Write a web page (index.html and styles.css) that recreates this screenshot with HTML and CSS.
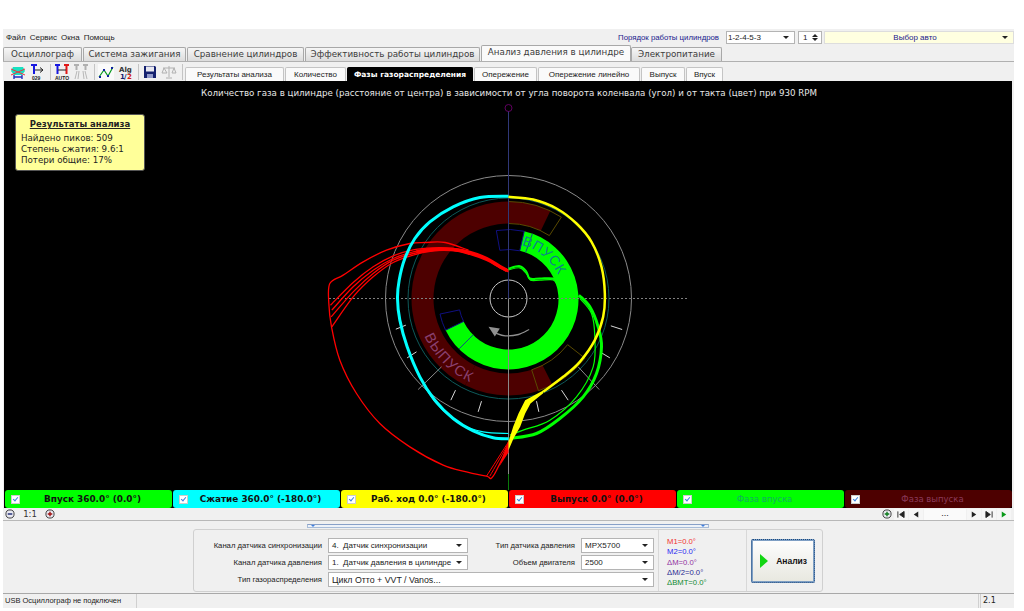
FILE: index.html
```html
<!DOCTYPE html>
<html lang="ru">
<head>
    <meta charset="UTF-8">
    <title>Анализ давления в цилиндре</title>
    <link rel="stylesheet" href="styles.css">
</head>
<body>
    <div class="app">
        <div class="top-row">
            <div class="menu">
                <span>Файл</span><span>Сервис</span><span>Окна</span><span>Помощь</span>
            </div>
            <div class="top-controls">
                <span class="order-label">Порядок работы цилиндров</span>
                <div class="combo combo-order"><span>1-2-4-5-3</span><i class="arrow"></i></div>
                <div class="spin"><span>1</span><i class="spin-arrows"></i></div>
                <div class="combo combo-car"><span>Выбор авто</span><i class="arrow"></i></div>
            </div>
        </div>

        <div class="main-tabs">
            <div class="main-tab tab-1">Осциллограф</div>
            <div class="main-tab tab-2">Система зажигания</div>
            <div class="main-tab tab-3">Сравнение цилиндров</div>
            <div class="main-tab tab-4">Эффективность работы цилиндров</div>
            <div class="main-tab tab-5 active">Анализ давления в цилиндре</div>
            <div class="main-tab tab-6">Электропитание</div>
        </div>

        <div class="toolbar-row">
            <div class="toolbar">
                <svg class="tool" viewBox="0 0 16 16">
                    <path d="M3 3h10l2 4-3 4H4L1 7z" fill="#19e0c0"/>
                    <path d="M1 5l14 6M15 5L1 11" stroke="#f03040" stroke-width="1"/>
                    <path d="M4 13h8M4 11v4M12 11v4" stroke="#2030c0" stroke-width="1.4" fill="none"/>
                </svg>
                <svg class="tool" viewBox="0 0 16 16">
                    <path d="M2 1h6M5 1v9" stroke="#1818e0" stroke-width="2" fill="none"/>
                    <path d="M6 6h8M11 3.500l3 2.500-3 2.500" stroke="#222" stroke-width="1" fill="none"/>
                    <text x="3" y="15.500" class="tool-text">029</text>
                </svg>
                <i class="tool-sep"></i>
                <svg class="tool" viewBox="0 0 16 16">
                    <path d="M1 1h5M3.500 1v9" stroke="#1818e0" stroke-width="2" fill="none"/>
                    <path d="M10 1h5M12.500 1v9" stroke="#e01818" stroke-width="2" fill="none"/>
                    <path d="M4 6h8" stroke="#222" stroke-width="1"/>
                    <text x="1" y="15.500" class="tool-text">AUTO</text>
                </svg>
                <svg class="tool" viewBox="0 0 16 16">
                    <path d="M1 1h5M3.500 1v5M10 1h5M12.500 1v5" stroke="#b0b0b0" stroke-width="2" fill="none"/>
                    <path d="M4 7L2 15M6 7l-1 8M10 7l1 8M12 7l2 8" stroke="#b8b8b8" stroke-width="1" fill="none"/>
                </svg>
                <i class="tool-sep"></i>
                <svg class="tool tool-on" viewBox="0 0 16 16">
                    <path d="M1 13L6 6l4 6 5-9" stroke="#0a9a20" stroke-width="1.200" fill="none"/>
                    <path d="M1 12h2v2H1zM5 5h2v2H5zM9 11h2v2H9zM13 3h2v2h-2z" fill="#1020a0"/>
                </svg>
                <svg class="tool" viewBox="0 0 16 16">
                    <text x="2" y="7.500" class="tool-alg">Alg</text>
                    <text x="3" y="15" class="tool-num">1</text>
                    <text x="7" y="15" class="tool-num">/</text>
                    <text x="10" y="15" class="tool-num-red">2</text>
                </svg>
                <i class="tool-sep"></i>
                <svg class="tool" viewBox="0 0 16 16">
                    <path d="M2 2h11l1 1v11H2z" fill="#14206e"/>
                    <path d="M4 2.500h8v5H4z" fill="#e8e8f0"/>
                    <path d="M5 10h6v4H5z" fill="#9098c8"/>
                </svg>
                <svg class="tool" viewBox="0 0 16 16">
                    <path d="M8 2v11M5 14h6M2 4h12M3 4L1 9h5zM13 4l-2 5h4z" stroke="#b0b0b0" fill="none"/>
                </svg>
                <i class="tool-sep"></i>
            </div>
            <div class="sub-tabs">
                <div class="sub-tab sub-1">Результаты анализа</div>
                <div class="sub-tab sub-2">Количество</div>
                <div class="sub-tab sub-3 active">Фазы газораспределения</div>
                <div class="sub-tab sub-4">Опережение</div>
                <div class="sub-tab sub-5">Опережение линейно</div>
                <div class="sub-tab sub-6">Выпуск</div>
                <div class="sub-tab sub-7">Впуск</div>
            </div>
        </div>

        <div class="chart">
            <div class="chart-title">Количество газа в цилиндре (расстояние от центра) в зависимости от угла поворота коленвала (угол) и от такта (цвет) при 930 RPM</div>
            <div class="info-box">
                <div class="info-title">Результаты анализа</div>
                <div>Найдено пиков: 509</div>
                <div>Степень сжатия: 9.6:1</div>
                <div>Потери общие: 17%</div>
            </div>
            <svg class="polar" width="1008" height="409" viewBox="0 0 1008 409" id="polar"></svg>
        </div>

        <div class="legend">
            <div class="legend-item c-green"><i class="check"></i><span>Впуск 360.0° (0.0°)</span></div>
            <div class="legend-item c-cyan"><i class="check"></i><span>Сжатие 360.0° (-180.0°)</span></div>
            <div class="legend-item c-yellow"><i class="check"></i><span>Раб. ход 0.0° (-180.0°)</span></div>
            <div class="legend-item c-red"><i class="check"></i><span>Выпуск 0.0° (0.0°)</span></div>
            <div class="legend-item c-phase-in"><i class="check"></i><span>Фаза впуска</span></div>
            <div class="legend-item c-phase-out"><i class="check"></i><span>Фаза выпуска</span></div>
        </div>

        <div class="nav-row">
            <div class="zoom-ctrl">
                <svg class="zoom-btn" viewBox="0 0 11 11"><circle cx="5.500" cy="5.500" r="4.500" fill="#e8e8f0" stroke="#333"/><path d="M3 5.500h5" stroke="#14206e" stroke-width="1.500"/></svg>
                <span class="zoom-value">1:1</span>
                <svg class="zoom-btn" viewBox="0 0 11 11"><circle cx="5.500" cy="5.500" r="4.500" fill="#e8e8f0" stroke="#333"/><path d="M3 5.500h5M5.500 3v5" stroke="#a01010" stroke-width="1.500"/></svg>
            </div>
            <div class="playback">
                <svg class="zoom-btn zoom-plus" viewBox="0 0 11 11"><circle cx="5.500" cy="5.500" r="4.500" fill="#e8e8f0" stroke="#333"/><path d="M3 5.500h5M5.500 3v5" stroke="#0a7a1a" stroke-width="1.500"/></svg>
                <div class="play-btn"><svg viewBox="0 0 9 7"><path d="M1 0v7M8 0v7L3 3.500z" stroke="#222" fill="#222" stroke-width="1"/></svg></div>
                <div class="play-btn"><svg viewBox="0 0 9 7"><path d="M7 0v7L2 3.500z" fill="#222"/></svg></div>
                <div class="play-value">...</div>
                <div class="play-btn"><svg viewBox="0 0 9 7"><path d="M2 0v7l5-3.500z" fill="#222"/></svg></div>
                <div class="play-btn"><svg viewBox="0 0 9 7"><path d="M8 0v7M1 0v7l5-3.500z" stroke="#222" fill="#222" stroke-width="1"/></svg></div>
                <div class="play-btn"><svg viewBox="0 0 9 7"><path d="M2 0v7l5-3.500z" fill="#0a9a1a"/></svg></div>
            </div>
        </div>

        <div class="bottom">
            <div class="splitter"><i></i><i></i></div>
            <div class="panel">
                <div class="panel-col col-left">
                    <div class="field"><label>Канал датчика синхронизации</label><div class="combo combo-wide"><span>4.&nbsp; Датчик синхронизации</span><i class="arrow"></i></div></div>
                    <div class="field"><label>Канал датчика давления</label><div class="combo combo-wide"><span>1.&nbsp; Датчик давления в цилиндре</span><i class="arrow"></i></div></div>
                    <div class="field"><label>Тип газораспределения</label><div class="combo combo-full"><span>Цикл Отто + VVT / Vanos...</span><i class="arrow"></i></div></div>
                    <div class="col-right">
                        <div class="field"><label>Тип датчика давления</label><div class="combo combo-short"><span>MPX5700</span><i class="arrow"></i></div></div>
                        <div class="field"><label>Объем двигателя</label><div class="combo combo-short"><span>2500</span><i class="arrow"></i></div></div>
                    </div>
                </div>
                <div class="markers">
                    <div class="m-red">M1=0.0°</div>
                    <div class="m-blue">M2=0.0°</div>
                    <div class="m-purple">ΔM=0.0°</div>
                    <div class="m-navy">ΔM/2=0.0°</div>
                    <div class="m-green">ΔBMT=0.0°</div>
                </div>
                <div class="run-cell">
                    <button class="run-btn"><svg width="9" height="14" viewBox="0 0 9 14"><path d="M0 0l8 7-8 7z" fill="#12d612"/></svg><span>Анализ</span></button>
                </div>
            </div>
        </div>

        <div class="status">
            <div class="status-pane pane-1">USB Осциллограф не подключен</div>
            <div class="status-pane pane-2"></div>
            <div class="status-pane pane-3">2.1</div>
        </div>
    </div>
    <script src="chart.js"></script>
</body>
</html>
```
FILE: styles.css
```css
html, body {
    margin: 0;
    height: 100%;
    background: #fff;
    overflow: hidden;
}

.app {
    box-sizing: border-box;
    width: 1011px;
    height: 579px;
    margin: 29px 0 0 3px;
    background: #f0f0f0;
    font-family: "Liberation Sans", Arial, sans-serif;
    font-size: 8px;
    color: #222;
    display: flex;
    flex-direction: column;
}

/* top row */
.top-row {
    height: 17px;
    display: flex;
    justify-content: space-between;
    align-items: center;
}

.menu {
    display: flex;
    gap: 4px;
    padding-left: 3px;
}

.top-controls {
    display: flex;
    align-items: center;
}

.order-label {
    color: #1a1a8c;
    margin-right: 7px;
    font-size: 7.800px;
}

.combo {
    box-sizing: border-box;
    display: flex;
    align-items: center;
    justify-content: space-between;
    height: 15px;
    padding: 0 3px;
    background: #fff;
    border: 1px solid #b4b4b4;
    white-space: nowrap;
}

.arrow {
    width: 0;
    height: 0;
    border: 3px solid transparent;
    border-top: 3px solid #222;
    border-bottom: 0;
    margin-right: 2px;
}

.combo-order {
    width: 69px;
    height: 13px;
    margin-right: 3px;
    padding-left: 1px;
}

.spin {
    box-sizing: border-box;
    width: 24px;
    height: 13px;
    padding: 0 3px 0 4px;
    background: #fff;
    border: 1px solid #b4b4b4;
    display: flex;
    align-items: center;
    justify-content: space-between;
    margin-right: 2px;
}

.spin-arrows {
    width: 0;
    height: 1px;
    border: 3px solid transparent;
    border-top: 0;
    position: relative;
    border-bottom: 3px solid #222;
    margin-bottom: 5px;
}

.spin-arrows::after {
    content: "";
    position: absolute;
    top: 5px;
    left: -3px;
    border: 3px solid transparent;
    border-bottom: 0;
    border-top: 3px solid #222;
}

.combo-car {
    width: 190px;
    height: 13px;
    background: #ffffe0;
    border-color: #ddd;
}

.combo-car span {
    flex: 1;
    text-align: center;
    color: #1a1a8c;
}

/* main tabs */
.main-tabs {
    display: flex;
    align-items: flex-end;
    height: 15px;
    font-family: "DejaVu Sans", Verdana, sans-serif;
    font-size: 8.750px;
    color: #3c3c3c;
}

.main-tab {
    box-sizing: border-box;
    height: 14px;
    text-align: center;
    line-height: 13px;
    white-space: nowrap;
    background: linear-gradient(#f6f6f6, #dcdcdc);
    border: 1px solid #a8a8a8;
    border-bottom: 0;
    border-radius: 2px 2px 0 0;
    margin-right: 1px;
}

.main-tab.active {
    height: 16px;
    background: #fafafa;
    margin-right: 0;
}

.tab-1 { width: 79px; }
.tab-2 { width: 103px; }
.tab-3 { width: 117px; }
.tab-4 { width: 175px; }
.tab-5 { width: 150px; }
.tab-6 { width: 91px; }

/* toolbar and sub tabs */
.toolbar-row {
    height: 20px;
    display: flex;
    border-top: 1px solid #b0b0b0;
    box-sizing: border-box;
}

.toolbar {
    width: 182px;
    display: flex;
    align-items: center;
    padding-left: 7px;
    box-sizing: border-box;
}

.tool {
    width: 16px;
    height: 16px;
    margin-right: 3px;
    flex: none;
}

.tool-on {
    background: #fafafa;
}

.tool-sep {
    width: 1px;
    height: 16px;
    background: #c4c4c4;
    margin: 0 3px 0 2px;
    flex: none;
}

.tool-text {
    font-family: "Liberation Sans", sans-serif;
    font-size: 5px;
    font-weight: bold;
    fill: #222;
}

.tool-alg {
    font-family: "DejaVu Sans", sans-serif;
    font-size: 7px;
    font-weight: bold;
    fill: #333;
}

.tool-num {
    font-family: "DejaVu Sans", sans-serif;
    font-size: 7px;
    font-weight: bold;
    fill: #14206e;
}

.tool-num-red {
    font-family: "DejaVu Sans", sans-serif;
    font-size: 7px;
    font-weight: bold;
    fill: #d01818;
}

.sub-tabs {
    display: flex;
    align-items: flex-end;
}

.sub-tab {
    box-sizing: border-box;
    height: 14px;
    text-align: center;
    line-height: 14px;
    white-space: nowrap;
    background: #fafafa;
    border: 1px solid #c4c4c4;
    border-bottom: 0;
    border-radius: 2px 2px 0 0;
    margin-right: 1px;
}

.sub-tab.active {
    background: #000;
    color: #fff;
    font-weight: bold;
    font-family: "DejaVu Sans", sans-serif;
    font-size: 7.500px;
    border-color: #000;
}

.sub-1 { width: 99px; }
.sub-2 { width: 61px; }
.sub-3 { width: 126px; }
.sub-4 { width: 63px; }
.sub-5 { width: 102px; }
.sub-6 { width: 44px; }
.sub-7 { width: 37px; }

/* chart */
.chart {
    position: relative;
    width: 1008px;
    height: 409px;
    margin-left: 1px;
    background: #000;
    overflow: hidden;
}

.chart-title {
    position: absolute;
    top: 7px;
    left: 0;
    right: 0;
    padding-left: 2px;
    text-align: center;
    color: #e8e8e8;
    font-family: "DejaVu Sans", Verdana, sans-serif;
    font-size: 8.680px;
    white-space: nowrap;
}

.info-box {
    position: absolute;
    left: 11px;
    top: 33px;
    box-sizing: border-box;
    width: 130px;
    height: 57px;
    padding: 2px 5px;
    background: #ffff99;
    border: 1px solid #555;
    border-radius: 3px;
    color: #222;
    font-family: "DejaVu Sans", Verdana, sans-serif;
    font-size: 8.700px;
    line-height: 11px;
}

.info-title {
    text-align: center;
    font-weight: bold;
    font-size: 8.500px;
    text-decoration: underline;
    line-height: 14px;
    margin-bottom: 2px;
}

.polar {
    display: block;
}

.label-in {
    font-family: "Liberation Sans", sans-serif;
    font-size: 14px;
    letter-spacing: 0.500px;
}

.label-out {
    font-family: "Liberation Sans", sans-serif;
    font-size: 14.500px;
    letter-spacing: 1px;
}

/* legend */
.legend {
    display: flex;
    height: 18px;
    margin-left: 1px;
    width: 1008px;
    background: #000;
}

.legend-item {
    flex: 1;
    display: flex;
    align-items: center;
    margin: 0 0.500px;
    border-radius: 3px;
    font-family: "DejaVu Sans", Verdana, sans-serif;
    font-size: 8.900px;
    font-weight: bold;
    color: #111;
    padding: 0 6px;
}

.legend-item span {
    flex: 1;
    text-align: center;
}

.check {
    width: 9px;
    height: 9px;
    background: #fff;
    position: relative;
    flex: none;
    border: 1px solid #ccc;
    box-sizing: border-box;
}

.check::after {
    content: "";
    position: absolute;
    left: 2px;
    top: 0;
    width: 2px;
    height: 4px;
    border: solid #3a80e0;
    border-width: 0 1px 1px 0;
    transform: rotate(40deg);
}

.c-green { background: #00ff00; }
.c-cyan { background: #00ffff; }
.c-yellow { background: #ffff00; }
.c-red { background: #ff0000; }
.c-phase-in { background: #00ff00; color: #10b060; font-weight: normal; font-size: 8.500px; }
.c-phase-out { background: #4d0000; color: #8a3a5a; font-weight: normal; font-size: 8.500px; }

/* nav row */
.nav-row {
    box-sizing: border-box;
    height: 13px;
    display: flex;
    justify-content: space-between;
    align-items: center;
    padding: 0 3px 0 2px;
    border-bottom: 1px solid #b8b8b8;
}

.zoom-ctrl {
    display: flex;
    align-items: center;
}

.zoom-btn {
    width: 10px;
    height: 10px;
    flex: none;
}

.zoom-value {
    width: 30px;
    text-align: center;
    font-family: "DejaVu Sans", sans-serif;
    font-size: 8.500px;
    color: #333;
}

.playback {
    display: flex;
    align-items: center;
    gap: 1px;
}

.zoom-plus {
    margin-right: 1px;
}

.play-btn {
    width: 14px;
    height: 11px;
    display: flex;
    align-items: center;
    justify-content: center;
    background: #f6f6f6;
}

.play-btn svg {
    width: 8px;
    height: 7px;
}

.play-value {
    width: 42px;
    text-align: center;
    font-size: 9px;
    line-height: 9px;
    background: #fafafa;
    height: 11px;
}

/* bottom panel */
.bottom {
    height: 73px;
    box-sizing: border-box;
    border-bottom: 1px solid #a8a8a8;
    padding-top: 3px;
}

.splitter {
    box-sizing: border-box;
    width: 402px;
    height: 4px;
    margin-left: 304px;
    border: 1px solid #a8bcd8;
    border-top-color: #88a0c8;
    display: flex;
    justify-content: space-between;
    padding: 0 3px;
    background: #eef2f8;
}

.splitter i {
    width: 0;
    height: 0;
    border: 2px solid transparent;
    border-top: 2px solid #4080e0;
    border-bottom: 0;
}

.panel {
    box-sizing: border-box;
    width: 630px;
    height: 63px;
    margin: 1px 0 0 190px;
    background: #f0f0f0;
    border: 1px solid #d0d0d0;
    border-radius: 3px;
    display: flex;
    align-items: stretch;
}

.panel-col {
    position: relative;
    width: 465px;
    padding: 8px 0 0 0;
    box-sizing: border-box;
    border-right: 1px solid #d8d8d8;
    display: flex;
    flex-direction: column;
    gap: 2px;
}

.field {
    display: flex;
    align-items: center;
    gap: 6px;
}

.field label {
    width: 128px;
    text-align: right;
    white-space: nowrap;
    font-size: 7.700px;
}

.combo-wide { width: 140px; }
.combo-full { width: 326px; }
.combo-full span { font-size: 8.800px; }
.combo-short { width: 73px; }

.col-right {
    position: absolute;
    left: 281px;
    top: 8px;
    display: flex;
    flex-direction: column;
    gap: 2px;
}

.col-right label {
    width: 100px;
}

.markers {
    width: 88px;
    box-sizing: border-box;
    padding: 7px 0 0 8px;
    font-size: 7.700px;
    line-height: 10.300px;
    border-right: 1px solid #d8d8d8;
}

.m-red { color: #f03030; }
.m-blue { color: #2828f0; }
.m-purple { color: #9030a0; }
.m-navy { color: #2a2a90; }
.m-green { color: #108a30; }

.run-cell {
    padding: 9px 0 0 4px;
}

.run-btn {
    box-sizing: border-box;
    width: 64px;
    height: 44px;
    padding: 0 6px 0 7px;
    display: flex;
    align-items: center;
    justify-content: space-between;
    background: linear-gradient(#fdfdfd, #e8e8e0);
    border: 2px solid #7f9fc4;
    outline: 1px dotted #1a4a80;
    outline-offset: -1px;
    border-radius: 2px;
    font-family: "Liberation Sans", sans-serif;
    font-size: 8.500px;
    font-weight: bold;
    color: #111;
}

/* status */
.status {
    flex: 1;
    display: flex;
    gap: 1px;
}

.status-pane {
    box-sizing: border-box;
    border-right: 1px solid #d0d0d0;
    line-height: 14px;
    padding-left: 2px;
}

.pane-1 { width: 134px; font-size: 7.500px; }
.pane-2 { flex: 1; }
.pane-3 { width: 34px; border-right: 0; border-left: 1px solid #d0d0d0; font-family: "DejaVu Sans", sans-serif; }
```
FILE: chart.js
```js
// polar phase plot, trace points are offsets from the centre at 3x scale
const svg = document.getElementById('polar');
const NS = 'http://www.w3.org/2000/svg';
const cx = 504.5;
const cy = 217.5;

const add = (name, attrs, text) => {
    const el = document.createElementNS(NS, name);
    for (const key in attrs) el.setAttribute(key, attrs[key]);
    if (text) el.textContent = text;
    svg.appendChild(el);
    return el;
};

const polar = (r, deg) => {
    const a = deg * Math.PI / 180;
    return [cx + r * Math.sin(a), cy - r * Math.cos(a)];
};

const sector = (r1, r2, from, to) => {
    const large = to - from > 180 ? 1 : 0;
    const a = polar(r2, from), b = polar(r2, to), c = polar(r1, to), d = polar(r1, from);
    return `M${a} A${r2} ${r2} 0 ${large} 1 ${b} L${c} A${r1} ${r1} 0 ${large} 0 ${d} Z`;
};

const smooth = (pts) => {
    const p = pts.map(([x, y]) => [cx + x / 3, cy + y / 3]);
    let d = `M${p[0][0]} ${p[0][1]}`;
    for (let i = 0; i < p.length - 1; i++) {
        const p0 = p[i - 1] || p[i], p1 = p[i], p2 = p[i + 1], p3 = p[i + 2] || p2;
        const c1 = [p1[0] + (p2[0] - p0[0]) / 6, p1[1] + (p2[1] - p0[1]) / 6];
        const c2 = [p2[0] - (p3[0] - p1[0]) / 6, p2[1] - (p3[1] - p1[1]) / 6];
        d += ` C${c1} ${c2} ${p2}`;
    }
    return d;
};

const trace = (pts, color, width) => add('path', { d: smooth(pts), fill: 'none', stroke: color, 'stroke-width': width });

const shape = (pts, color) => add('polygon', {
    points: pts.map(([x, y]) => `${cx + x / 3},${cy + y / 3}`).join(' '),
    fill: color
});

const arcLabel = (id, d, cls, color, text) => {
    add('path', { id, d, fill: 'none' });
    const label = add('text', { class: cls, fill: color });
    const tp = document.createElementNS(NS, 'textPath');
    tp.setAttribute('href', `#${id}`);
    tp.textContent = text;
    label.appendChild(tp);
};

// phase bands
add('path', { d: sector(75, 97, 206.5, 385.5), fill: '#4d0000' });
add('path', { d: sector(75, 97, 153, 206.5), fill: '#4d0000' });
add('path', { d: sector(50, 70, 13, 244), fill: '#00ff00', transform: 'translate(0 1)' });
add('path', { d: sector(75, 97, 0, 33), fill: 'none', stroke: '#5a4a00' });
add('path', { d: sector(75, 97, 128, 162), fill: 'none', stroke: '#5a4a00' });
add('path', { d: sector(50, 70, -10, 13), fill: 'none', stroke: '#101080', transform: 'translate(0 1)' });
add('path', { d: sector(50, 70, 244, 258), fill: 'none', stroke: '#101080', transform: 'translate(0 1)' });

[20, 225].forEach((deg) => {
    const a = polar(50, deg), b = polar(70, deg);
    add('line', { x1: a[0], y1: a[1] + 1, x2: b[0], y2: b[1] + 1, stroke: '#105080' });
});

// rings
add('circle', { cx, cy, r: 123, fill: 'none', stroke: '#8a8a8a' });
add('circle', { cx, cy, r: 100.5, fill: 'none', stroke: '#0e5a5a' });
add('circle', { cx, cy, r: 18.5, fill: 'none', stroke: '#c8c8c8' });

// axes
add('line', { x1: 325, y1: cy, x2: 684, y2: cy, stroke: '#808080', 'stroke-dasharray': '2 2' });
add('line', { x1: cx, y1: 30, x2: cx, y2: cy, stroke: '#303878' });
add('line', { x1: cx, y1: cy, x2: cx, y2: 393, stroke: '#8a8a8a' });
add('line', { x1: cx, y1: 393, x2: cx, y2: 409, stroke: '#0a7a0a' });
add('circle', { cx, cy: 27, r: 3.5, fill: 'none', stroke: '#600060' });

// tick marks on the lower half
[[-338, 92, -308, 80], [-304, 178, -276, 160], [-271, 273, -201, 205], [-173, 305, -159, 275],
 [-91, 340, -81, 308], [84, 308, 91, 340], [159, 275, 179, 305], [209, 205, 272, 273],
 [279, 163, 304, 178], [307, 82, 341, 93]].forEach(([x1, y1, x2, y2], i) => {
    add('line', {
        x1: cx + x1 / 3, y1: cy + y1 / 3, x2: cx + x2 / 3, y2: cy + y2 / 3,
        stroke: (i === 2 || i === 7) ? '#8a8a8a' : '#d8d8d8'
    });
});

// band labels
arcLabel('inlet-arc', `M${polar(55, 14)} A55 55 0 0 1 ${polar(55, 100)}`, 'label-in', '#0d7f8f', 'ВПУСК');
arcLabel('exhaust-arc', `M${polar(92, 246)} A92 92 0 0 0 ${polar(92, 190)}`, 'label-out', '#8a4070', 'ВЫПУСК');

// rotation arrow
add('path', { d: smooth([[62, 93], [30, 108], [-10, 112], [-40, 103]]), fill: 'none', stroke: '#909090', 'stroke-width': 1.3 });
shape([[-60, 85], [-26, 90], [-41, 114]], '#909090');

// red trace
trace([[0, -85], [-26, -95], [-66, -117], [-116, -135], [-166, -147], [-226, -147], [-286, -140], [-346, -120], [-406, -85], [-466, -35], [-530, 35]], '#ff0000', 1.3);
trace([[0, -85], [-26, -95], [-66, -117], [-116, -135], [-166, -147], [-226, -144], [-286, -135], [-346, -115], [-406, -75], [-466, -20], [-532, 55]], '#ff0000', 1.3);
trace([[0, -85], [-26, -95], [-66, -118], [-116, -138], [-166, -150], [-226, -152], [-286, -146], [-346, -128], [-406, -95], [-466, -48], [-534, 20]], '#ff0000', 1.3);
trace([[0, -80], [-26, -92], [-66, -114], [-116, -132], [-166, -144], [-226, -143], [-286, -130], [-346, -108], [-406, -65], [-466, -5], [-530, 85]], '#ff0000', 1.3);
trace([[-4, -84], [-26, -96], [-66, -120], [-116, -138], [-166, -147], [-226, -147], [-276, -140]], '#ff0000', 3.5);
trace([[-120, -145], [-190, -168], [-250, -168], [-296, -165], [-366, -145], [-436, -110], [-496, -70], [-536, -45], [-539, 15], [-531, 85], [-506, 185], [-456, 285], [-386, 375], [-296, 445], [-196, 500], [-126, 520], [-66, 533], [-46, 533], [0, 440]], '#ff0000', 1.3);
trace([[-66, 533], [0, 430]], '#ff0000', 1);
trace([[-56, 533], [0, 435]], '#ff0000', 1);
shape([[0, 425], [0, 462], [-28, 505]], '#ff0000');

// green trace
trace([[0, -90], [34, -97], [54, -80], [64, -60], [94, -60], [134, -60], [146, -45]], '#00ff00', 2);
trace([[0, -86], [34, -92], [54, -74], [66, -55], [94, -55], [134, -56], [146, -40]], '#00ff00', 1.2);
trace([[211, -10], [244, 25], [269, 85], [279, 145], [264, 225], [224, 295], [154, 360], [84, 405], [4, 420]], '#00ff00', 3);
trace([[214, 0], [249, 45], [259, 115], [254, 205], [204, 295], [124, 365], [44, 395], [4, 410]], '#00ff00', 1.2);

// cyan trace
trace([[0, -307], [-86, -303], [-166, -275], [-236, -230], [-281, -180], [-311, -120], [-328, -55], [-333, 0], [-326, 65], [-304, 145], [-266, 235], [-221, 305], [-166, 360], [-106, 397], [-46, 418], [0, 421]], '#00ffff', 3);
trace([[-256, 255], [-216, 315], [-146, 375], [-76, 400], [0, 405]], '#00ffff', 1.2);

// yellow trace
trace([[0, -305], [74, -297], [144, -270], [204, -225], [249, -170], [279, -95], [289, -15], [284, 55], [259, 125], [214, 190], [164, 235], [104, 280]], '#ffff00', 2.5);
shape([[104, 276], [50, 305], [30, 345], [14, 385], [0, 430], [0, 455], [15, 420], [35, 385], [50, 345], [66, 315], [104, 284]], '#ffff00');
```
